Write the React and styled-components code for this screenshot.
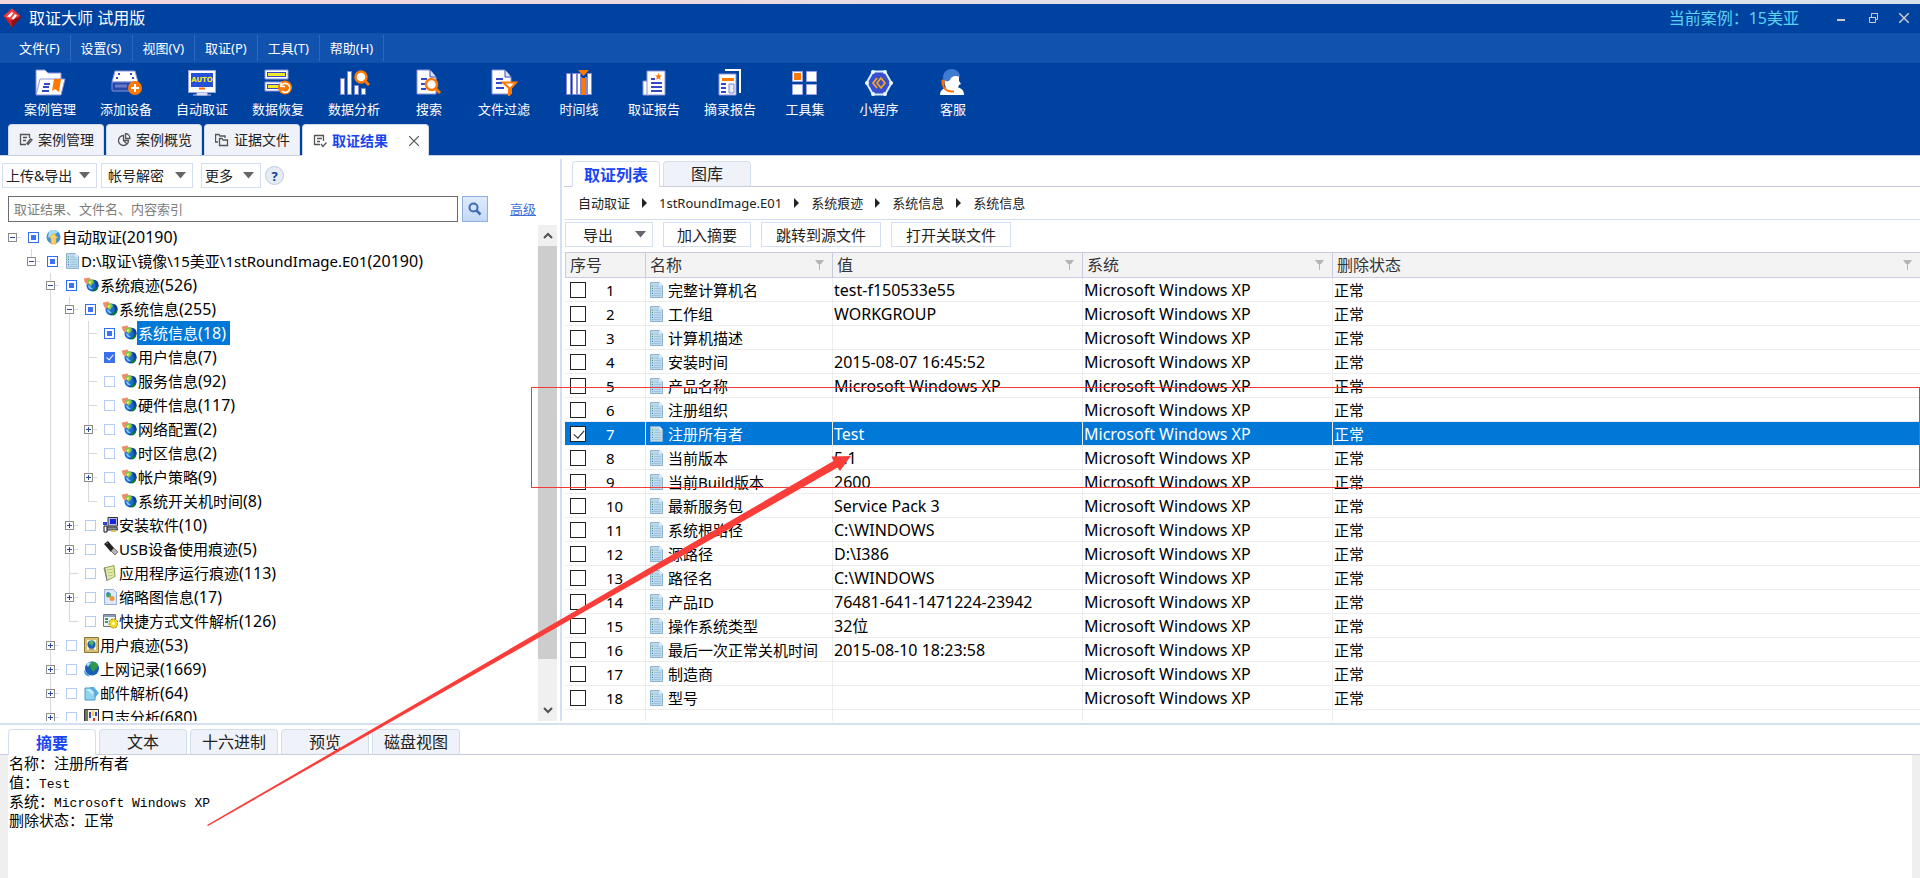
import React from "react";
import styled, { createGlobalStyle, css } from "styled-components";

/* ===== DATA ===== */
const menus = ["文件(F)", "设置(S)", "视图(V)", "取证(P)", "工具(T)", "帮助(H)"];

const tools = [
  { icon: "case", label: "案例管理", width: 76 },
  { icon: "device", label: "添加设备", width: 76 },
  { icon: "auto", label: "自动取证", width: 76 },
  { icon: "recover", label: "数据恢复", width: 76 },
  { icon: "analyze", label: "数据分析", width: 76 },
  { icon: "search", label: "搜索", width: 74 },
  { icon: "filter", label: "文件过滤", width: 76 },
  { icon: "timeline", label: "时间线", width: 74 },
  { icon: "report", label: "取证报告", width: 76 },
  { icon: "excerpt", label: "摘录报告", width: 76 },
  { icon: "toolset", label: "工具集", width: 74 },
  { icon: "applet", label: "小程序", width: 74 },
  { icon: "service", label: "客服", width: 74 },
];

const workTabs = [
  { icon: "edit", label: "案例管理" },
  { icon: "pie", label: "案例概览" },
  { icon: "folders", label: "证据文件" },
  { icon: "result", label: "取证结果", active: true },
];

// guides: which ancestor levels still have a line running past this row
const tree = [
  { level: 0, name: "自动取证", count: 20190, icon: "home", state: "partial", toggle: "-", guides: [], last: true },
  { level: 1, name: "D:\\取证\\镜像\\15美亚\\1stRoundImage.E01", count: 20190, icon: "doc", state: "partial", toggle: "-", guides: [], last: true },
  { level: 2, name: "系统痕迹", count: 526, icon: "globe", state: "partial", toggle: "-", guides: [] },
  { level: 3, name: "系统信息", count: 255, icon: "globe", state: "partial", toggle: "-", guides: [2] },
  { level: 4, name: "系统信息", count: 18, icon: "globe", state: "partial", guides: [2, 3], selected: true },
  { level: 4, name: "用户信息", count: 7, icon: "globe", state: "checked", guides: [2, 3] },
  { level: 4, name: "服务信息", count: 92, icon: "globe", guides: [2, 3] },
  { level: 4, name: "硬件信息", count: 117, icon: "globe", guides: [2, 3] },
  { level: 4, name: "网络配置", count: 2, icon: "globe", toggle: "+", guides: [2, 3] },
  { level: 4, name: "时区信息", count: 2, icon: "globe", guides: [2, 3] },
  { level: 4, name: "帐户策略", count: 9, icon: "globe", toggle: "+", guides: [2, 3] },
  { level: 4, name: "系统开关机时间", count: 8, icon: "globe", guides: [2, 3], last: true },
  { level: 3, name: "安装软件", count: 10, icon: "install", toggle: "+", guides: [2] },
  { level: 3, name: "USB设备使用痕迹", count: 5, icon: "usb", toggle: "+", guides: [2] },
  { level: 3, name: "应用程序运行痕迹", count: 113, icon: "note", guides: [2] },
  { level: 3, name: "缩略图信息", count: 17, icon: "thumb", toggle: "+", guides: [2] },
  { level: 3, name: "快捷方式文件解析", count: 126, icon: "shortcut", guides: [2], last: true },
  { level: 2, name: "用户痕迹", count: 53, icon: "user", toggle: "+", guides: [] },
  { level: 2, name: "上网记录", count: 1669, icon: "earth", toggle: "+", guides: [] },
  { level: 2, name: "邮件解析", count: 64, icon: "mail", toggle: "+", guides: [] },
  { level: 2, name: "日志分析", count: 680, icon: "log", toggle: "+", guides: [] },
];

const crumbs = ["自动取证", "1stRoundImage.E01", "系统痕迹", "系统信息", "系统信息"];

const columns = [
  { label: "序号", width: 81 },
  { label: "名称", width: 187, filter: true },
  { label: "值", width: 250, filter: true },
  { label: "系统", width: 250, filter: true },
  { label: "删除状态", filter: true },
];

const records = [
  ["完整计算机名", "test-f150533e55"],
  ["工作组", "WORKGROUP"],
  ["计算机描述", ""],
  ["安装时间", "2015-08-07 16:45:52"],
  ["产品名称", "Microsoft Windows XP"],
  ["注册组织", ""],
  ["注册所有者", "Test"],
  ["当前版本", "5.1"],
  ["当前Build版本", "2600"],
  ["最新服务包", "Service Pack 3"],
  ["系统根路径", "C:\\WINDOWS"],
  ["源路径", "D:\\I386"],
  ["路径名", "C:\\WINDOWS"],
  ["产品ID", "76481-641-1471224-23942"],
  ["操作系统类型", "32位"],
  ["最后一次正常关机时间", "2015-08-10 18:23:58"],
  ["制造商", ""],
  ["型号", ""],
];

const detailTabs = ["摘要", "文本", "十六进制", "预览", "磁盘视图"];

/* ===== GLOBAL ===== */
const GlobalStyle = createGlobalStyle`
  * {
    box-sizing: border-box;
  }

  body {
    margin: 0;
    background: #ffffff;
    color: #000000;
    font-family: "Noto Sans", "Noto Sans CJK SC", sans-serif;
    font-size: 15px;
  }

  button,
  input {
    margin: 0;
    padding: 0;
    font-family: inherit;
  }

  svg {
    display: block;
    flex: none;
  }
`;

const Page = styled.div`
  position: relative;
  display: flex;
  flex-direction: column;
  height: 100vh;
  overflow: hidden;
`;

/* ===== HEADER ===== */
const DesktopEdge = styled.div`
  flex: none;
  height: 4px;
  background: linear-gradient(90deg, #eed6dc 0%, #ecd9e2 35%, #dfe0ea 60%, #d8e2ec 100%);
`;

const TitleBar = styled.header`
  flex: none;
  display: flex;
  align-items: center;
  height: 29px;
  padding: 0 8px 2px 3px;
  background: #00429f;
  color: #ffffff;
`;

const AppName = styled.h1`
  margin: 0 auto 0 8px;
  font-size: 16px;
  font-weight: 400;
  line-height: 24px;
`;

const CurrentCase = styled.span`
  margin-right: 34px;
  color: #5ad2f4;
  font-size: 16px;
  line-height: 24px;
`;

const WindowButton = styled.button`
  display: flex;
  align-items: center;
  justify-content: center;
  width: 16px;
  height: 16px;
  margin-left: ${(props) => props.$gap || 0}px;
  border: 0;
  background: transparent;
`;

const MenuBar = styled.nav`
  flex: none;
  display: flex;
  align-items: center;
  height: 30px;
  padding-left: 9px;
  background: #1052ae;
`;

const MenuItem = styled.button`
  height: 26px;
  padding: 0 10px;
  border: 0;
  border-right: 1px solid #2a69c2;
  background: transparent;
  color: #ffffff;
  font-size: 13px;
  line-height: 24px;
`;

const ToolBar = styled.div`
  flex: none;
  display: flex;
  height: 61px;
  padding: 6px 0 0 12px;
  background: #00429f;
`;

const Tool = styled.button`
  display: flex;
  flex-direction: column;
  align-items: center;
  width: ${(props) => props.$width}px;
  border: 0;
  background: transparent;
  color: #ffffff;
  font-size: 13px;
  line-height: 20px;

  svg {
    margin-bottom: 3px;
  }
`;

const WorkTabs = styled.div`
  flex: none;
  display: flex;
  gap: 2px;
  height: 32px;
  padding: 0 8px;
  border-bottom: 1px solid #c9cfe2;
  background: #00429f;
`;

const WorkTab = styled.button`
  display: flex;
  align-items: center;
  gap: 5px;
  height: ${(props) => (props.$active ? 32 : 31)}px;
  padding: 0 9px 0 10px;
  border: 1px solid #cfd9ea;
  border-bottom: 0;
  border-radius: 4px 4px 0 0;
  background: ${(props) => (props.$active ? "#ffffff" : "#eff2f8")};
  color: ${(props) => (props.$active ? "#1a46f0" : "#222222")};
  font-size: 14px;
  font-weight: ${(props) => (props.$active ? 700 : 400)};
  line-height: 20px;
`;

const CloseMark = styled.span`
  margin-left: 16px;
`;

/* ===== WORKSPACE ===== */
const Workspace = styled.main`
  flex: 1;
  display: flex;
  min-height: 0;
`;

const Sidebar = styled.section`
  flex: none;
  display: flex;
  flex-direction: column;
  width: 560px;
  padding-top: 7px;
`;

const SideActions = styled.div`
  flex: none;
  display: flex;
  align-items: center;
  gap: 4px;
  padding: 0 2px;
`;

const DropButton = styled.button`
  display: flex;
  align-items: center;
  justify-content: space-between;
  width: ${(props) => props.$width}px;
  height: 25px;
  margin-right: ${(props) => props.$after || 0}px;
  padding: 0 6px 0 ${(props) => props.$left || 3}px;
  border: 1px solid #d3def0;
  background: #ffffff;
  color: #222222;
  font-size: ${(props) => props.$size || 14}px;
  line-height: 20px;
  white-space: nowrap;
`;

const HelpButton = styled.button`
  width: 19px;
  height: 19px;
  border: 1px solid #bccbe2;
  border-radius: 50%;
  background: #e7ecf4;
  color: #0f3f96;
  font-size: 13px;
  font-weight: 700;
  line-height: 16px;
`;

const SearchRow = styled.div`
  flex: none;
  display: flex;
  align-items: center;
  padding: 8px 0 3px 8px;
`;

const SearchBox = styled.input`
  width: 450px;
  height: 26px;
  padding: 0 5px;
  border: 1px solid #6b6b6b;
  background: #ffffff;
  font-size: 13px;

  &::placeholder {
    color: #7d7d7d;
    opacity: 1;
  }
`;

const SearchButton = styled.button`
  display: flex;
  align-items: center;
  justify-content: center;
  width: 26px;
  height: 26px;
  margin-left: 4px;
  border: 1px solid #8fb0dc;
  background: linear-gradient(#dfebfc, #c3d8f7);
`;

const AdvancedLink = styled.a`
  margin-left: 22px;
  color: #3c6fd8;
  font-size: 13px;
  line-height: 20px;
`;

const TreeArea = styled.div`
  flex: 1;
  display: flex;
  min-height: 0;
`;

const Tree = styled.div`
  flex: 1;
  min-width: 0;
  padding-left: 4px;
  overflow: hidden;
`;

const TreeRow = styled.div`
  display: flex;
  align-items: center;
  height: 24px;
`;

const Guide = styled.span`
  width: 19px;
  height: 24px;
  background: ${(props) =>
    props.$on
      ? "linear-gradient(#d9d9d9, #d9d9d9) 8px 0 / 1px 24px no-repeat"
      : "none"};
`;

const line = "linear-gradient(#d9d9d9, #d9d9d9)";

const Node = styled.span`
  display: flex;
  align-items: center;
  width: 24px;
  height: 24px;
  padding-left: 4px;
  background:
    ${line} 8px 0 / 1px ${(props) => (props.$root ? 0 : props.$last ? 12 : 24)}px no-repeat,
    ${line} 8px 12px / 9px 1px no-repeat;
`;

const Toggle = styled.button`
  display: flex;
  align-items: center;
  justify-content: center;
  width: 9px;
  height: 9px;
  border: 1px solid #8a8a8a;
  background:
    linear-gradient(#2b4a9c, #2b4a9c) center / 5px 1px no-repeat,
    ${(props) =>
      props.$open
        ? ""
        : "linear-gradient(#2b4a9c, #2b4a9c) center / 1px 5px no-repeat,"}
    #ffffff;
`;

const TreeCheck = styled.input`
  flex: none;
  appearance: none;
  width: 11px;
  height: 11px;
  margin-right: 7px;
  border: 1px solid #b7ccf8;
  background: #ffffff;

  ${(props) =>
    props.$partial &&
    css`
      border-color: #2f6df2;
      background: linear-gradient(#3a74f4, #3a74f4) center / 5px 5px no-repeat #ffffff;
    `}

  &:checked {
    border-color: #3a70ec;
    background: #3a70ec;
  }

  &:checked::after {
    content: "";
    display: block;
    width: 3px;
    height: 6px;
    margin: 0 0 0 3px;
    border: solid #ffffff;
    border-width: 0 1px 1px 0;
    transform: rotate(40deg);
  }
`;

const TreeLabel = styled.label`
  height: 24px;
  padding: 0 4px 0 1px;
  background: ${(props) => (props.$selected ? "#0078d7" : "transparent")};
  color: ${(props) => (props.$selected ? "#ffffff" : "#000000")};
  font-size: 15px;
  line-height: 24px;
  white-space: nowrap;
`;

const Count = styled.span`
  font-size: 16px;
`;

const ScrollBar = styled.div`
  flex: none;
  display: flex;
  flex-direction: column;
  width: 19px;
  margin-right: 3px;
  background: #f0f0f0;
`;

const ScrollButton = styled.button`
  flex: none;
  display: flex;
  align-items: center;
  justify-content: center;
  height: 21px;
  border: 0;
  background: transparent;
`;

const ScrollTrack = styled.div`
  flex: 1;
`;

const ScrollThumb = styled.div`
  height: 91%;
  background: #cdcdcd;
`;

const Content = styled.section`
  flex: 1;
  display: flex;
  flex-direction: column;
  min-width: 0;
  margin-top: 3px;
  padding: 2px 0 0 2px;
  border-left: 2px solid #d4dff2;
`;

const Tabs = styled.div`
  flex: none;
  display: flex;
  gap: 3px;
  height: 26px;
  padding: 0 8px;
  border-bottom: 1px solid #cbcbdf;
`;

const Tab = styled.button`
  width: 88px;
  height: ${(props) => (props.$active ? 26 : 25)}px;
  border: 1px solid #d3def0;
  border-bottom: 0;
  border-radius: 4px 4px 0 0;
  background: ${(props) => (props.$active ? "#ffffff" : "#eff2f8")};
  color: ${(props) => (props.$active ? "#1a46f0" : "#222222")};
  font-size: 16px;
  font-weight: ${(props) => (props.$active ? 700 : 400)};
  line-height: 24px;
`;

const Breadcrumb = styled.nav`
  flex: none;
  display: flex;
  align-items: center;
  gap: 12px;
  height: 33px;
  padding-left: 14px;
  border-bottom: 1px solid #d3def0;
  color: #222222;
  font-size: 13px;
  line-height: 20px;
`;

const ListActions = styled.div`
  flex: none;
  display: flex;
  gap: 10px;
  padding: 2px 1px 5px;
`;

const ActionButton = styled.button`
  width: ${(props) => props.$width}px;
  height: 25px;
  border: 1px solid #d3def0;
  background: #ffffff;
  color: #222222;
  font-size: 15px;
  line-height: 22px;
`;

const TableWrap = styled.div`
  flex: 1;
  min-height: 0;
  padding-left: 1px;
  overflow: hidden;
`;

const Table = styled.table`
  width: 100%;
  border-collapse: separate;
  border-spacing: 0;
  table-layout: fixed;
`;

const HeadCell = styled.th`
  height: 26px;
  padding: 0 8px 0 4px;
  border: 1px solid #cbcbdf;
  border-width: 1px 1px 1px 0;
  background: #f3f3f3;
  color: #333333;
  font-size: 16px;
  font-weight: 400;
  line-height: 24px;
  text-align: left;

  &:first-child {
    border-left-width: 1px;
  }

  &:last-child {
    border-right: 0;
  }
`;

const HeadContent = styled.div`
  display: flex;
  align-items: center;
  justify-content: space-between;
`;

const Row = styled.tr`
  background: ${(props) => (props.$selected ? "#0078d7" : "#ffffff")};
  color: ${(props) => (props.$selected ? "#ffffff" : "#000000")};
`;

const Cell = styled.td`
  height: 24px;
  padding: 0 0 0 ${(props) => props.$left || 1}px;
  border-right: 1px solid #ededed;
  border-bottom: 1px solid #ededed;
  font-size: ${(props) => props.$size || 16}px;
  line-height: 22px;
  white-space: nowrap;

  &:last-child {
    border-right: 0;
  }
`;

const CellContent = styled.div`
  display: flex;
  align-items: center;
  gap: ${(props) => props.$gap}px;
`;

const RowCheck = styled.input`
  appearance: none;
  width: 16px;
  height: 16px;
  border: 1px solid #222222;
  background: #ffffff;

  &:checked::after {
    content: "";
    display: block;
    width: 5px;
    height: 9px;
    margin: 1px 0 0 5px;
    border: solid #222222;
    border-width: 0 1px 1px 0;
    transform: rotate(42deg);
  }
`;

/* ===== DETAILS ===== */
const Details = styled.section`
  flex: none;
  display: flex;
  flex-direction: column;
  height: 155px;
  margin-top: 2px;
  padding-top: 4px;
  border-top: 2px solid #d4dff2;
`;

const DetailBody = styled.div`
  flex: 1;
  padding: 1px 1px 0;
  border: solid #efefef;
  border-width: 0 8px;
  font-family: "Liberation Mono", "Noto Sans CJK SC", monospace;
  font-size: 15px;
  line-height: 19px;
`;

const DetailLine = styled.p`
  margin: 0;
`;

const Ascii = styled.span`
  font-size: 13px;
`;

/* ===== MARKUP OVER THE WINDOW ===== */
const MarkBox = styled.div`
  position: absolute;
  top: 387px;
  right: 0;
  left: 531px;
  height: 101px;
  border: 1px solid #f23b38;
  pointer-events: none;
`;

const MarkArrow = styled.svg`
  position: absolute;
  top: 450px;
  left: 200px;
  pointer-events: none;
`;

/* ===== ICONS ===== */
const Logo = () => (
  <svg width="18" height="20" viewBox="0 0 18 20">
    <path d="M9 .500.500 8 9 19.500 17.500 9z" fill="#d01c22" />
    <path d="M9 .500.500 8l8.200 4.500L17.500 8z" fill="#f03a3c" />
    <path d="M8.700 12.500 17.500 8v2L9 19.500z" fill="#8e0f16" />
    <path d="M4 8.500 8.500 4l2 1L7 9.500zM8.500 10.500 12 6l2 1.500-3.500 4z" fill="#fff" />
  </svg>
);

const toolShapes = {
  case: (
    <>
      <path d="M1 25V1h9l3 3h13v21z" fill="#fff" stroke="#8c94dc" />
      <path d="M5 10h25l-4 16H1z" fill="#fff" stroke="#8c94dc" />
      <path d="M9 15h6M8 18h6M7 22h7" stroke="#3549c8" strokeWidth="2" />
      <path d="M19 10h7l-2 13-4-3-3 2z" fill="#ff7800" />
    </>
  ),
  device: (
    <>
      <path d="M4 2h20l3 11H1z" fill="#fff" stroke="#8c94dc" />
      <rect x="1" y="13" width="25" height="9" rx="1" fill="#2248a8" stroke="#8c94dc" />
      <path d="M4 17h12" stroke="#6d78cc" strokeWidth="3" />
      <path d="M7 5h2M19 5h2M5 9h2M21 9h2" stroke="#3549c8" strokeWidth="2" />
      <circle cx="24" cy="19" r="7" fill="#ff7800" />
      <path d="M24 15v8M20 19h8" stroke="#fff" strokeWidth="2" />
    </>
  ),
  auto: (
    <>
      <rect x="1.500" y="1.500" width="27" height="22" fill="#fff" stroke="#9aa2e4" />
      <rect x="4" y="4" width="22" height="14" fill="#2750d8" />
      <text x="15" y="13" textAnchor="middle" fontSize="7" fontWeight="700" fontFamily="DejaVu Sans, sans-serif" fill="#f4ee22">AUTO</text>
      <path d="M12 19.500h6" stroke="#ff6a00" strokeWidth="2" />
      <path d="M10 24h10v2H10zM6 26h18" fill="#fff" stroke="#c8ccf4" />
    </>
  ),
  recover: (
    <>
      <path d="M2 1h23v9H2zM2 13h23v9H2z" fill="#fff" stroke="#8c94dc" />
      <path d="M4 5.500h19M4 17.500h12" stroke="#3549c8" strokeWidth="5" />
      <path d="M5 5.500h17M5 17.500h11" stroke="#f0e828" strokeWidth="3" />
      <circle cx="22" cy="18.500" r="7" fill="#ff7800" />
      <path d="M19 22a4.500 4.500 0 1 0-.8-5M18 13.500v4h4" fill="none" stroke="#fff" strokeWidth="1.600" />
    </>
  ),
  analyze: (
    <>
      <path d="M1.500 9.500h4v16h-4zM8.500 2.500h4v23h-4zM15.500 16.500h4v9h-4zM22.500 19.500h4v6h-4z" fill="#fff" stroke="#7f88d8" />
      <circle cx="22" cy="8" r="5.500" fill="#fff" stroke="#ff7800" strokeWidth="2.500" />
      <path d="m26 12 4 4" stroke="#ff7800" strokeWidth="3" />
    </>
  ),
  search: (
    <>
      <path d="M3 1h13l6 7v17H3z" fill="#fff" stroke="#8c94dc" />
      <path d="M16 1v7h6" fill="#dfe3fa" stroke="#3549c8" />
      <path d="M7 10h6M7 15h4M7 20h5" stroke="#3549c8" strokeWidth="2" />
      <circle cx="17.500" cy="15.500" r="5.500" fill="#fff" stroke="#ff7800" strokeWidth="2.500" />
      <path d="m21 19 5 5" stroke="#ff7800" strokeWidth="3" />
    </>
  ),
  filter: (
    <>
      <path d="M3 1h13l6 7v17H3z" fill="#fff" stroke="#8c94dc" />
      <path d="M16 1v7h6" fill="#dfe3fa" stroke="#3549c8" />
      <path d="M7 10h7M7 14h6M7 19h8" stroke="#3549c8" strokeWidth="2" />
      <path d="M14 13.500h13l-5 5.500v5l-2 2v-7z" fill="#fff" stroke="#ff7800" strokeWidth="2" />
    </>
  ),
  timeline: (
    <>
      <path d="M2.500 4.500h4v21h-4zM8.500 4.500h4v21h-4zM13.500 4.500h3v21h-3zM23.500 4.500h4v21h-4z" fill="#fff" stroke="#7f88d8" />
      <path d="M16 8h2v18h-2zM21 8h3v18h-3z" fill="#7f88d8" />
      <path d="M19.500 9v17" stroke="#ff7800" strokeWidth="3" />
      <path d="M14 1h11l-5.500 6z" fill="#ff7800" />
    </>
  ),
  report: (
    <>
      <path d="M4 12h6v14H4z" fill="#fff" stroke="#8c94dc" />
      <path d="M8 2h18v24H8z" fill="#fff" stroke="#8c94dc" />
      <path d="M12 10h4M12 14h11M12 18h11M12 22h11" stroke="#3549c8" strokeWidth="2" />
      <path d="m19.500 4 1 2.500h2.500l-2 1.700.7 2.800-2.200-1.500-2.200 1.500.7-2.800-2-1.700h2.500z" fill="#ff7800" />
    </>
  ),
  excerpt: (
    <>
      <path d="M10 1h15v23" fill="none" stroke="#fff" strokeWidth="2" />
      <path d="M4 5h17v21H4z" fill="#fff" stroke="#8c94dc" />
      <path d="M7 10.500h12" stroke="#ff7800" strokeWidth="3" />
      <path d="M6 15h5M6 19h5M6 23h5" stroke="#3549c8" strokeWidth="2" />
      <path d="M14 15h5v9h-5z" fill="#e9ebfb" stroke="#7f88d8" />
    </>
  ),
  toolset: (
    <>
      <path d="M2.500 2.500h10v10h-10zM16.500 2.500h10v10h-10zM2.500 15.500h10v10h-10zM16.500 15.500h10v10h-10z" fill="#fff" stroke="#9aa2e4" />
      <path d="M4 4h7v7H4z" fill="#ff7800" />
    </>
  ),
  applet: (
    <>
      <path d="M9 2.500h12L27.500 14 21 25.500H9L2.500 14z" fill="#3a4fd0" stroke="#d8f0ff" strokeWidth="2" />
      <g fill="#e8f8ff">
        <circle cx="9" cy="3" r="2" />
        <circle cx="21" cy="3" r="2" />
        <circle cx="27" cy="14" r="2" />
        <circle cx="21" cy="25" r="2" />
        <circle cx="9" cy="25" r="2" />
        <circle cx="3" cy="14" r="2" />
      </g>
      <path d="m13 9-4 5 4 5M17 9l-4 5 4 5 4-5z" fill="none" stroke="#f6a81c" strokeWidth="1.700" />
    </>
  ),
  service: (
    <>
      <path d="M2 26c0-5 4-7 7-8h10c4 1 7 3 7 8z" fill="#fff" />
      <path d="M6 8c2-6 14-6 15 0v4l2 3-2 1c-1 6-13 6-14 0z" fill="#fff" />
      <path d="M5 9C5 3 9 0 14 0s8 4 8 8c-4-2-9-1-10 3-2 2-6 2-7-2z" fill="#3f7bd0" />
      <path d="M4 11h2v5H4z" fill="#ff7000" stroke="#ff7000" />
      <path d="M5 16c1 4 3 6 8 6.500h3" fill="none" stroke="#ff7000" strokeWidth="2" />
    </>
  ),
};

const ToolIcon = ({ name }) => (
  <svg width="31" height="27" viewBox="0 0 31 27" fill="none">
    {toolShapes[name]}
  </svg>
);

const tabShapes = {
  edit: <path d="M7 11.500H1.500v-10h9V5M4 4.500h4M4 7.500h3M8 10.500 11.500 6l1.500 1-4 4.500z" />,
  pie: <path d="M6.500 2.500a5 5 0 1 0 5 5h-5zM8.500.500v5h4.500a5 5 0 0 0-4.500-5zM6.500 7.500 10 11" />,
  folders: <path d="M3 9H.500V1.500H4L5 3h5v2M4.500 12.500v-7H7L8 7h4.500v5.500z" />,
  result: <path d="M7 10.500H1.500v-9h9V7M4 4.500h5M4 7.500h3M8 10l2 2.500 3.500-4" />,
};

const TabIcon = ({ name }) => (
  <svg width="14" height="14" viewBox="0 0 14 14" fill="none" stroke="#555" strokeWidth="1.300">
    {tabShapes[name]}
  </svg>
);

const Caret = () => (
  <svg width="11" height="7" viewBox="0 0 11 7">
    <path d="M0 0h11L5.500 6.500z" fill="#666" />
  </svg>
);

const CrumbArrow = () => (
  <svg width="5" height="10" viewBox="0 0 5 10">
    <path d="M0 0v10l5-5z" fill="#222" />
  </svg>
);

const Funnel = () => (
  <svg width="9" height="10" viewBox="0 0 9 10">
    <path d="M0 0h9L6 4H5v6H4V4H3z" fill="#b5b5b5" />
  </svg>
);

const DocShape = () => (
  <>
    <path d="M1.500.500h9l3 3v12h-12z" fill="#bcd9ee" stroke="#8fb3cd" />
    <path d="M10.500.500v3h3z" fill="#f2f9ff" />
    <path d="M3 4h1M3 6.500h1" stroke="#2f9e54" />
    <path d="M3 9h1M3 11.500h1" stroke="#4c74c8" />
    <path d="M5.500 4H10M5.500 6.500H12M5.500 9H12M5.500 11.500H12M3 13.500h9" stroke="#8fb5d2" strokeWidth=".6" />
  </>
);

const treeShapes = {
  home: (
    <>
      <circle cx="7.500" cy="8" r="7" fill="#3e93dc" />
      <path d="M3 3c3-3 7-2 9 0L8 6 5 9 2 8z" fill="#a9dcf7" />
      <path d="M7.500 4 3.500 9H5v6h5V9h2z" fill="#fbd069" stroke="#e0a42c" strokeWidth=".6" />
    </>
  ),
  doc: <DocShape />,
  globe: (
    <>
      <circle cx="8.500" cy="8.500" r="6" fill="#1e6ad0" />
      <path d="M10 3c3 0 5 3 4.500 6-1 4-5 6-8 4.500 4 0 6-3 5-6z" fill="#0b3f94" />
      <path d="M9 12c3 0 4-2 5-4 1 3-1 6-4 6.500z" fill="#0a7a2e" />
      <path d="M4 8c2 0 3 3 5 4-3 1-5-1-5-4z" fill="#7cc6f6" />
      <path d="M0 1.500 5.500.500l1.500 3-3 4C1 7 0 4 0 1.500z" fill="#f28c6a" />
      <path d="m4 3 4-1 2 3-3 4C5 8 4 6 4 3z" fill="#7cc940" />
      <path d="m4.500 5 3-1-1.500 3.500z" fill="#fff27a" />
    </>
  ),
  install: (
    <>
      <path d="M5 .500h9.500V9H5z" fill="#b9bbd8" stroke="#333" />
      <path d="M7 2h6v5H7z" fill="#1525d8" />
      <path d="M3 10h11l.500 3H4z" fill="#8d8fa8" stroke="#333" />
      <path d="M0 5h4v3H0z" fill="#3146c8" />
      <path d="M1 9h3v6H1z" fill="#fff" stroke="#111" />
      <path d="M8 13h5v2H8z" fill="#d8c84a" />
    </>
  ),
  usb: (
    <>
      <path d="m1 3 4-3 6 7-3 4z" fill="#222" />
      <path d="m8 10 3-3 4 4-3 3z" fill="#b5b5b5" stroke="#555" strokeWidth=".7" />
      <path d="m3 3 2-1" stroke="#777" />
    </>
  ),
  note: (
    <>
      <path d="M1 3 11 .500l1 11L4 15.500z" fill="#e3edaa" stroke="#8e9c58" />
      <path d="m4 5 6-1M4.500 8l6-1M5 11l5-1" stroke="#b9c77a" />
      <path d="m1 3 1 .500 2 12" stroke="#6f7d8c" fill="none" />
    </>
  ),
  thumb: (
    <>
      <path d="M1.500.500h9l3 3v12h-12z" fill="#dce9fb" stroke="#98aed4" />
      <circle cx="5.500" cy="6" r="2.500" fill="#49a957" />
      <circle cx="9" cy="9.500" r="2.500" fill="#f0953c" />
      <circle cx="5" cy="4.500" r="1.500" fill="#3f7fd0" />
    </>
  ),
  shortcut: (
    <>
      <path d="M.500 1.500h12v12H.500z" fill="#eef1f5" stroke="#6f7680" />
      <path d="M1 2h11v2H1z" fill="#8d9bc4" />
      <path d="M2 6h3M2 9h3" stroke="#3c9c58" strokeWidth="2" />
      <circle cx="10.500" cy="10.500" r="4.500" fill="#f0dc22" stroke="#8a7c08" strokeDasharray="2 1" />
      <circle cx="10.500" cy="10.500" r="1.500" fill="#fffbd0" />
    </>
  ),
  user: (
    <>
      <path d="M.500.500h14v15H.500z" fill="#d8bf78" stroke="#8b7430" />
      <path d="M3 3h9v10H3z" fill="#f8f2dc" />
      <circle cx="7.500" cy="7.500" r="4" fill="#1b62b8" />
      <path d="M5 6c1-3 4-3 5-1L8 9z" fill="#56b556" />
      <path d="M5 12h5" stroke="#555" />
    </>
  ),
  earth: (
    <>
      <circle cx="8" cy="7.500" r="7" fill="#1a5fb6" />
      <path d="M7 1c4-1 7 2 7 5L9 11 6 6z" fill="#2f9a4b" />
      <path d="M2 3c2-2 4-2 5-1L4 6z" fill="#a9dcf5" />
      <path d="M0 9c0 5 3 7 6 6L3 12z" fill="#48a7e4" />
    </>
  ),
  mail: (
    <>
      <path d="M6 2h4l5 6-5 6H6z" fill="#5ab0e8" />
      <path d="M1 3h6l4 4v8H1z" fill="#8fd3ec" stroke="#4b9cc8" />
      <path d="M2 4h4l3 3v3z" fill="#c9f0fa" />
    </>
  ),
  log: (
    <>
      <path d="M.500.500h14v15H.500z" fill="#f4ede2" stroke="#333" />
      <path d="M1 1h3v14H1z" fill="#6e7a5c" />
      <path d="M6 3v6M12 3v4" stroke="#3a3fd8" strokeWidth="2" />
      <path d="M9 2v5" stroke="#f0d22c" strokeWidth="2" />
      <path d="M10 9v4" stroke="#d8323c" strokeWidth="2" />
    </>
  ),
};

const TreeIcon = ({ name }) => (
  <svg width="15" height="16" viewBox="0 0 15 16" fill="none">
    {treeShapes[name]}
  </svg>
);

/* ===== COMPONENTS ===== */
const Header = () => (
  <>
    <TitleBar>
      <Logo />
      <AppName>取证大师 试用版</AppName>
      <CurrentCase>当前案例：15美亚</CurrentCase>
      <WindowButton aria-label="最小化">
        <svg width="8" height="8">
          <path d="M0 5h8v2H0z" fill="#ccc" />
        </svg>
      </WindowButton>
      <WindowButton aria-label="还原" $gap={17}>
        <svg width="10" height="12" fill="none" stroke="#ccc">
          <path d="M.500 5.500h6v5h-6zM2.500 5V1.500h6v6H7M2 1.500h7M0 5.500h7" />
        </svg>
      </WindowButton>
      <WindowButton aria-label="关闭" $gap={14}>
        <svg width="10" height="10" stroke="#ccc" strokeWidth="1.500">
          <path d="m0 0 10 10M10 0 0 10" />
        </svg>
      </WindowButton>
    </TitleBar>
    <MenuBar>
      {menus.map((menu) => (
        <MenuItem key={menu}>{menu}</MenuItem>
      ))}
    </MenuBar>
    <ToolBar>
      {tools.map((tool) => (
        <Tool key={tool.icon} $width={tool.width}>
          <ToolIcon name={tool.icon} />
          {tool.label}
        </Tool>
      ))}
    </ToolBar>
    <WorkTabs>
      {workTabs.map((tab) => (
        <WorkTab key={tab.label} $active={tab.active}>
          <TabIcon name={tab.icon} />
          {tab.label}
          {tab.active && (
            <CloseMark>
              <svg width="10" height="10" stroke="#555" strokeWidth="1.200">
                <path d="m0 0 10 10M10 0 0 10" />
              </svg>
            </CloseMark>
          )}
        </WorkTab>
      ))}
    </WorkTabs>
  </>
);

const TreeItem = ({ item, index }) => {
  const id = `node-${index}`;

  return (
    <TreeRow>
      {Array.from({ length: item.level }, (_, level) => (
        <Guide key={level} $on={item.guides.includes(level)} />
      ))}
      <Node $root={item.level === 0} $last={item.last}>
        {item.toggle && (
          <Toggle
            $open={item.toggle === "-"}
            aria-label={item.toggle === "-" ? "收起" : "展开"}
          />
        )}
      </Node>
      <TreeCheck
        id={id}
        type="checkbox"
        defaultChecked={item.state === "checked"}
        $partial={item.state === "partial"}
      />
      <TreeIcon name={item.icon} />
      <TreeLabel htmlFor={id} $selected={item.selected}>
        {item.name}
        <Count>({item.count})</Count>
      </TreeLabel>
    </TreeRow>
  );
};

const SidePanel = () => (
  <Sidebar>
    <SideActions>
      <DropButton $width={95}>
        上传&amp;导出
        <Caret />
      </DropButton>
      <DropButton $width={92} $left={6} $after={4}>
        帐号解密
        <Caret />
      </DropButton>
      <DropButton $width={60}>
        更多
        <Caret />
      </DropButton>
      <HelpButton>?</HelpButton>
    </SideActions>
    <SearchRow>
      <SearchBox
        aria-label="搜索"
        placeholder="取证结果、文件名、内容索引"
      />
      <SearchButton aria-label="搜索">
        <svg width="14" height="14" fill="none" stroke="#3e6cb4">
          <circle cx="5.500" cy="5.500" r="4" strokeWidth="2" />
          <path d="m8.500 8.500 4 4" strokeWidth="2.500" />
        </svg>
      </SearchButton>
      <AdvancedLink href="#advanced">高级</AdvancedLink>
    </SearchRow>
    <TreeArea>
      <Tree>
        {tree.map((item, index) => (
          <TreeItem key={index} item={item} index={index} />
        ))}
      </Tree>
      <ScrollBar>
        <ScrollButton aria-label="向上滚动">
          <svg width="10" height="7" fill="none" stroke="#505050" strokeWidth="2">
            <path d="m1 6 4-4 4 4" />
          </svg>
        </ScrollButton>
        <ScrollTrack>
          <ScrollThumb />
        </ScrollTrack>
        <ScrollButton aria-label="向下滚动">
          <svg width="10" height="7" fill="none" stroke="#505050" strokeWidth="2">
            <path d="m1 1 4 4 4-4" />
          </svg>
        </ScrollButton>
      </ScrollBar>
    </TreeArea>
  </Sidebar>
);

const RecordTable = () => (
  <TableWrap>
    <Table>
      <colgroup>
        {columns.map((column) => (
          <col key={column.label} width={column.width} />
        ))}
      </colgroup>
      <thead>
        <tr>
          {columns.map((column) => (
            <HeadCell key={column.label}>
              <HeadContent>
                {column.label}
                {column.filter && <Funnel />}
              </HeadContent>
            </HeadCell>
          ))}
        </tr>
      </thead>
      <tbody>
        {records.map(([name, value], index) => (
          <Row key={name} $selected={index === 6}>
            <Cell $left={5} $size={15}>
              <CellContent $gap={20}>
                <RowCheck
                  type="checkbox"
                  aria-label={name}
                  defaultChecked={index === 6}
                />
                {index + 1}
              </CellContent>
            </Cell>
            <Cell $left={3} $size={15}>
              <CellContent $gap={4}>
                <TreeIcon name="doc" />
                {name}
              </CellContent>
            </Cell>
            <Cell>{value}</Cell>
            <Cell>Microsoft Windows XP</Cell>
            <Cell $size={15}>正常</Cell>
          </Row>
        ))}
        <Row>
          {columns.map((column) => (
            <Cell key={column.label} />
          ))}
        </Row>
      </tbody>
    </Table>
  </TableWrap>
);

const MainPanel = () => (
  <Content>
    <Tabs>
      <Tab $active>取证列表</Tab>
      <Tab>图库</Tab>
    </Tabs>
    <Breadcrumb>
      {crumbs.map((crumb, index) => (
        <React.Fragment key={index}>
          {index > 0 && <CrumbArrow />}
          <span>{crumb}</span>
        </React.Fragment>
      ))}
    </Breadcrumb>
    <ListActions>
      <DropButton $width={88} $left={17} $size={15}>
        导出
        <Caret />
      </DropButton>
      <ActionButton $width={88}>加入摘要</ActionButton>
      <ActionButton $width={120}>跳转到源文件</ActionButton>
      <ActionButton $width={120}>打开关联文件</ActionButton>
    </ListActions>
    <RecordTable />
  </Content>
);

const DetailPanel = () => (
  <Details>
    <Tabs>
      {detailTabs.map((tab, index) => (
        <Tab key={tab} $active={index === 0}>
          {tab}
        </Tab>
      ))}
    </Tabs>
    <DetailBody>
      <DetailLine>名称：注册所有者</DetailLine>
      <DetailLine>
        值：<Ascii>Test</Ascii>
      </DetailLine>
      <DetailLine>
        系统：<Ascii>Microsoft Windows XP</Ascii>
      </DetailLine>
      <DetailLine>删除状态：正常</DetailLine>
    </DetailBody>
  </Details>
);

const App = () => {
  return (
    <Page>
      <GlobalStyle />
      <DesktopEdge />
      <Header />
      <Workspace>
        <SidePanel />
        <MainPanel />
      </Workspace>
      <DetailPanel />
      <MarkBox />
      <MarkArrow width="660" height="380" viewBox="200 450 660 380">
        <path
          d="M207 825 833.500 461l-2-4.500L851 456l-11 15-2.500-3.500L208 826z"
          fill="#fb3d3a"
        />
      </MarkArrow>
    </Page>
  );
};

export default App;
